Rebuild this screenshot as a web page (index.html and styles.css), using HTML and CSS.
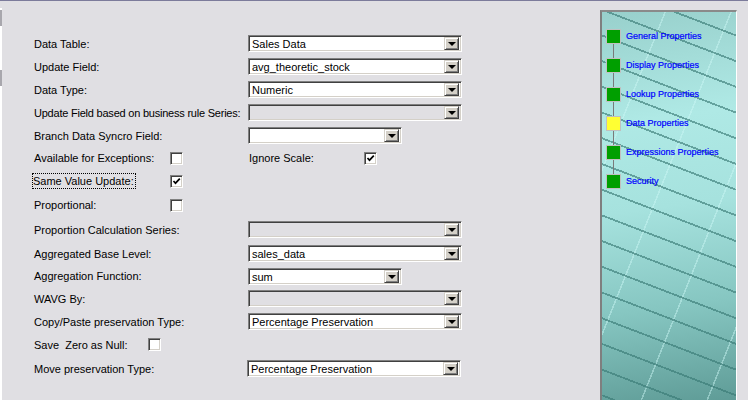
FILE: index.html
```html
<!DOCTYPE html>
<html>
<head>
<meta charset="utf-8">
<title>Data Properties</title>
<link rel="stylesheet" href="styles.css">
</head>
<body>
<div class="main">
  <div class="edge"><div class="edge-block"></div><div class="edge-gap"></div><div class="edge-block"></div></div>
  <div class="form">
    <div class="row">
      <span class="label">Data Table:</span>
      <div class="select"><span class="value">Sales Data</span><span class="btn"><i class="tri"></i></span></div>
    </div>
    <div class="row">
      <span class="label">Update Field:</span>
      <div class="select"><span class="value">avg_theoretic_stock</span><span class="btn"><i class="tri"></i></span></div>
    </div>
    <div class="row">
      <span class="label">Data Type:</span>
      <div class="select"><span class="value">Numeric</span><span class="btn"><i class="tri"></i></span></div>
    </div>
    <div class="row">
      <span class="label tight">Update Field based on business rule Series:</span>
      <div class="select disabled"><span class="value"></span><span class="btn"><i class="tri"></i></span></div>
    </div>
    <div class="row">
      <span class="label">Branch Data Syncro Field:</span>
      <div class="select narrow"><span class="value"></span><span class="btn"><i class="tri"></i></span></div>
    </div>
    <div class="row row-short">
      <span class="clabel w136">Available for Exceptions:</span>
      <span class="check"></span>
      <span class="clabel w115 second">Ignore Scale:</span>
      <span class="check"><svg class="mark" viewBox="0 0 9 9" width="9" height="9"><path d="M1.5 4 L3.5 6.2 L7.8 1.6" fill="none" stroke="#000" stroke-width="1.7"/></svg></span>
    </div>
    <div class="row row-tall">
      <span class="clabel w136"><span class="focus">Same Value Update:</span></span>
      <span class="check"><svg class="mark" viewBox="0 0 9 9" width="9" height="9"><path d="M1.5 4 L3.5 6.2 L7.8 1.6" fill="none" stroke="#000" stroke-width="1.7"/></svg></span>
    </div>
    <div class="row row-tall">
      <span class="clabel w136">Proportional:</span>
      <span class="check"></span>
    </div>
    <div class="row row-xtall">
      <span class="label">Proportion Calculation Series:</span>
      <div class="select disabled"><span class="value"></span><span class="btn"><i class="tri"></i></span></div>
    </div>
    <div class="row">
      <span class="label">Aggregated Base Level:</span>
      <div class="select"><span class="value">sales_data</span><span class="btn"><i class="tri"></i></span></div>
    </div>
    <div class="row row-short">
      <span class="label">Aggregation Function:</span>
      <div class="select narrow"><span class="value">sum</span><span class="btn"><i class="tri"></i></span></div>
    </div>
    <div class="row">
      <span class="label">WAVG By:</span>
      <div class="select disabled"><span class="value"></span><span class="btn"><i class="tri"></i></span></div>
    </div>
    <div class="row">
      <span class="label">Copy/Paste preservation Type:</span>
      <div class="select"><span class="value">Percentage Preservation</span><span class="btn"><i class="tri"></i></span></div>
    </div>
    <div class="row">
      <span class="clabel w114 pre">Save  Zero as Null:</span>
      <span class="check"></span>
    </div>
    <div class="row row-xtall">
      <span class="label shift">Move preservation Type:</span>
      <div class="select"><span class="value">Percentage Preservation</span><span class="btn"><i class="tri"></i></span></div>
    </div>
  </div>
  <div class="side">
    <div class="panel">
      <div class="nav">
        <div class="item"><span class="sq green"></span><span class="nav-text">General Properties</span></div>
        <div class="conn"></div>
        <div class="item"><span class="sq green"></span><span class="nav-text">Display Properties</span></div>
        <div class="conn"></div>
        <div class="item"><span class="sq green"></span><span class="nav-text">Lookup Properties</span></div>
        <div class="conn"></div>
        <div class="item"><span class="sq yellow"></span><span class="nav-text">Data Properties</span></div>
        <div class="conn"></div>
        <div class="item"><span class="sq green"></span><span class="nav-text">Expressions Properties</span></div>
        <div class="conn"></div>
        <div class="item"><span class="sq green"></span><span class="nav-text">Security</span></div>
      </div>
    </div>
  </div>
</div>
</body>
</html>
```

FILE: styles.css
```css
* { box-sizing: border-box; }
html, body {
  margin: 0;
  padding: 0;
}
body {
  width: 748px;
  height: 400px;
  overflow: hidden;
  background: #e0dfe3;
  border-top: 1px solid #7c7b9b;
  font-family: "Liberation Sans", Arial, sans-serif;
  font-size: 11px;
  color: #000;
}
.main {
  display: flex;
  height: 399px;
}
.edge {
  width: 2px;
  margin-top: 7px;
  background: #ffffff;
  display: flex;
  flex-direction: column;
}
.edge-block {
  height: 16px;
  margin-top: 2px;
  background: #a8a7ad;
}
.edge-gap { height: 42px; }

.form {
  flex: 1;
  padding: 31px 0 0 32px;
  display: flex;
  flex-direction: column;
}
.row {
  height: 23px;
  display: flex;
  align-items: center;
  flex-shrink: 0;
}
.row-short { height: 22px; }
.row-tall { height: 24px; }
.row-xtall { height: 25px; }

.label {
  width: 206px;
  margin-right: 8px;
  white-space: nowrap;
  line-height: 14px;
}
.label.tight { letter-spacing: -0.22px; }
.label.shift { margin-right: 7px; }
.clabel {
  white-space: nowrap;
  line-height: 14px;
}
.w136 { width: 136px; }
.w115 { width: 115px; }
.w114 { width: 114px; }
.second { margin-left: 66px; }
.pre { white-space: pre; }
.focus {
  outline: 1px dotted #000;
  outline-offset: 0;
  padding: 0 1px 0 0;
  margin-left: -1px;
  display: inline-block;
  line-height: 14px;
}

.select {
  width: 214px;
  height: 17px;
  display: flex;
  align-items: stretch;
  background: #fff;
  border-top: 1px solid #808080;
  border-left: 1px solid #808080;
  border-right: 1px solid #ffffff;
  border-bottom: 1px solid #ffffff;
  box-shadow: inset 1px 1px 0 #404040, inset -1px -1px 0 #d4d0c8;
  padding: 2px;
}
.select.narrow { width: 154px; }
.select.disabled { background: #e0dfe3; }
.value {
  flex: 1;
  padding-left: 1px;
  line-height: 13px;
  white-space: nowrap;
}
.btn {
  width: 15px;
  height: 13px;
  margin-top: -1px;
  background: #d4d0c8;
  border-top: 1px solid #d4d0c8;
  border-left: 1px solid #d4d0c8;
  border-right: 1px solid #404040;
  border-bottom: 1px solid #404040;
  box-shadow: inset 1px 1px 0 #ffffff, inset -1px -1px 0 #808080;
  display: flex;
  align-items: center;
  justify-content: center;
}
.tri {
  width: 0;
  height: 0;
  border-left: 4px solid transparent;
  border-right: 4px solid transparent;
  border-top: 4px solid #000;
  margin-top: 1px;
}

.check {
  width: 13px;
  height: 13px;
  background: #fff;
  border-top: 1px solid #808080;
  border-left: 1px solid #808080;
  border-right: 1px solid #ffffff;
  border-bottom: 1px solid #ffffff;
  box-shadow: inset 1px 1px 0 #404040, inset -1px -1px 0 #d4d0c8;
  display: flex;
  align-items: center;
  justify-content: center;
  flex-shrink: 0;
}
.mark { display: block; }

.side {
  width: 137px;
  margin-right: 11px;
  padding-top: 9px;
  display: flex;
  flex-direction: column;
}
.panel {
  flex: 1;
  border-top: 2px solid #8a8a8a;
  border-left: 2px solid #7f7f7f;
  border-right: 1px solid #ffffff;
  background:
    repeating-linear-gradient(201deg, transparent 0 21px, rgba(55,120,115,0.62) 21px 22.8px, transparent 22.8px 24px),
    repeating-linear-gradient(111.8deg, transparent 0 58px, rgba(205,248,246,0.45) 58px 59.5px, transparent 59.5px 61px),
    linear-gradient(172deg, #98d0cc 0%, #afe9e5 28%, #a6e2de 50%, #86c6c1 75%, #5f9c97 100%);
  padding: 17px 0 0 4px;
}
.nav {
  display: flex;
  flex-direction: column;
}
.item {
  display: flex;
  align-items: center;
  height: 15px;
}
.sq {
  width: 15px;
  height: 15px;
  border: 1px solid #c0c0c0;
  flex-shrink: 0;
}
.green { background: #009f00; }
.yellow { background: #ffff33; }
.nav-text {
  margin-left: 5px;
  font-size: 9px;
  color: #0000ff;
  white-space: nowrap;
  margin-top: -2px;
  -webkit-text-stroke: 0.2px #0000ff;
}
.conn {
  width: 1px;
  height: 14px;
  margin-left: 7px;
  background: #7a7a7a;
}
```
